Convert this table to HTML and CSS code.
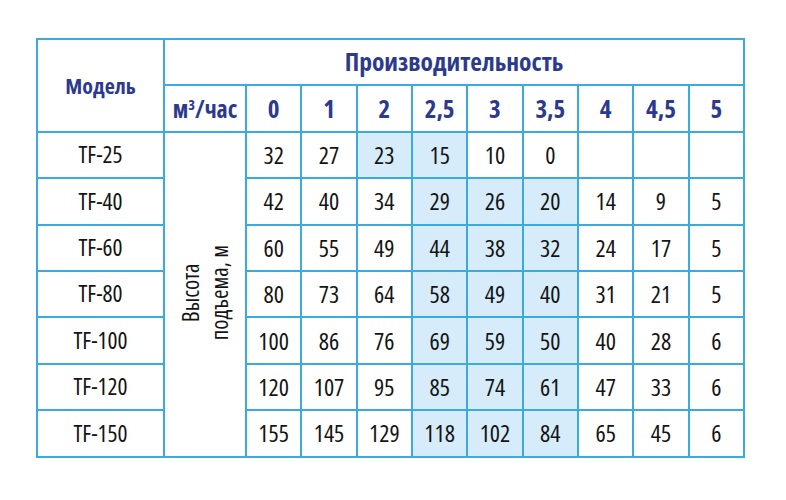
FILE: index.html
```html
<!DOCTYPE html>
<html lang="ru">
<head>
<meta charset="utf-8">
<title>Производительность</title>
<link rel="stylesheet" href="styles.css">
</head>
<body>
<table class="perf">
  <colgroup>
    <col class="c-model">
    <col class="c-unit">
    <col span="9">
  </colgroup>
  <tr class="r-h1">
    <th rowspan="2" class="hd hd-model">Модель</th>
    <th colspan="10" class="hd hd-title">Производительность</th>
  </tr>
  <tr class="r-h2">
    <th class="hd hd-unit">м<sup>3</sup>/час</th>
    <th class="hd">0</th><th class="hd">1</th><th class="hd">2</th><th class="hd">2,5</th><th class="hd">3</th><th class="hd">3,5</th><th class="hd">4</th><th class="hd">4,5</th><th class="hd">5</th>
  </tr>
  <tr>
    <td class="name">TF-25</td>
    <td rowspan="7" class="vert"><span class="vtext">Высота<br>подъема, м</span></td>
    <td>32</td><td>27</td><td class="sh">23</td><td class="sh">15</td><td>10</td><td>0</td><td></td><td></td><td></td>
  </tr>
  <tr>
    <td class="name">TF-40</td>
    <td>42</td><td>40</td><td>34</td><td class="sh">29</td><td class="sh">26</td><td class="sh">20</td><td>14</td><td>9</td><td>5</td>
  </tr>
  <tr>
    <td class="name">TF-60</td>
    <td>60</td><td>55</td><td>49</td><td class="sh">44</td><td class="sh">38</td><td class="sh">32</td><td>24</td><td>17</td><td>5</td>
  </tr>
  <tr>
    <td class="name">TF-80</td>
    <td>80</td><td>73</td><td>64</td><td class="sh">58</td><td class="sh">49</td><td class="sh">40</td><td>31</td><td>21</td><td>5</td>
  </tr>
  <tr>
    <td class="name">TF-100</td>
    <td>100</td><td>86</td><td>76</td><td class="sh">69</td><td class="sh">59</td><td class="sh">50</td><td>40</td><td>28</td><td>6</td>
  </tr>
  <tr>
    <td class="name">TF-120</td>
    <td>120</td><td>107</td><td>95</td><td class="sh">85</td><td class="sh">74</td><td class="sh">61</td><td>47</td><td>33</td><td>6</td>
  </tr>
  <tr>
    <td class="name">TF-150</td>
    <td>155</td><td>145</td><td>129</td><td class="sh">118</td><td class="sh">102</td><td class="sh">84</td><td>65</td><td>45</td><td>6</td>
  </tr>
</table>
</body>
</html>
```
FILE: styles.css
```css
html, body {
  margin: 0;
  padding: 0;
  background: #ffffff;
}

body {
  font-family: "Open Sans", "Liberation Sans", sans-serif;
  font-stretch: 75%;
  color: #141414;
}

.perf {
  border-collapse: collapse;
  table-layout: fixed;
  width: 709px;
  margin: 38px 0 0 36px;
  font-size: 24px;
}

.c-model { width: 127px; }
.c-unit { width: 82px; }

.perf th,
.perf td {
  border: 2px solid #3aaadf;
  padding: 0;
  text-align: center;
  vertical-align: middle;
  line-height: 1;
  white-space: nowrap;
}

.r-h1 { height: 46px; }
.r-h2 { height: 45px; }
.perf tr { height: 46.4px; }

.hd {
  font-weight: 700;
  font-size: 25px;
  color: #2c3a8e;
}

.hd-model {
  font-size: 22px;
  padding-top: 10px;
}

.hd-title {
  font-size: 25.5px;
}

.hd-unit {
  font-size: 24px;
}

.hd sup {
  font-size: 0.6em;
  vertical-align: 0.55em;
  line-height: 0;
}

.name {
  font-size: 23.5px;
}

.sh {
  background: #d6ecfa;
}

.vert {
  padding: 0;
}

.vtext {
  display: inline-block;
  writing-mode: vertical-rl;
  transform: rotate(180deg);
  text-align: center;
  font-size: 23px;
  line-height: 29px;
  color: #141414;
}
```
